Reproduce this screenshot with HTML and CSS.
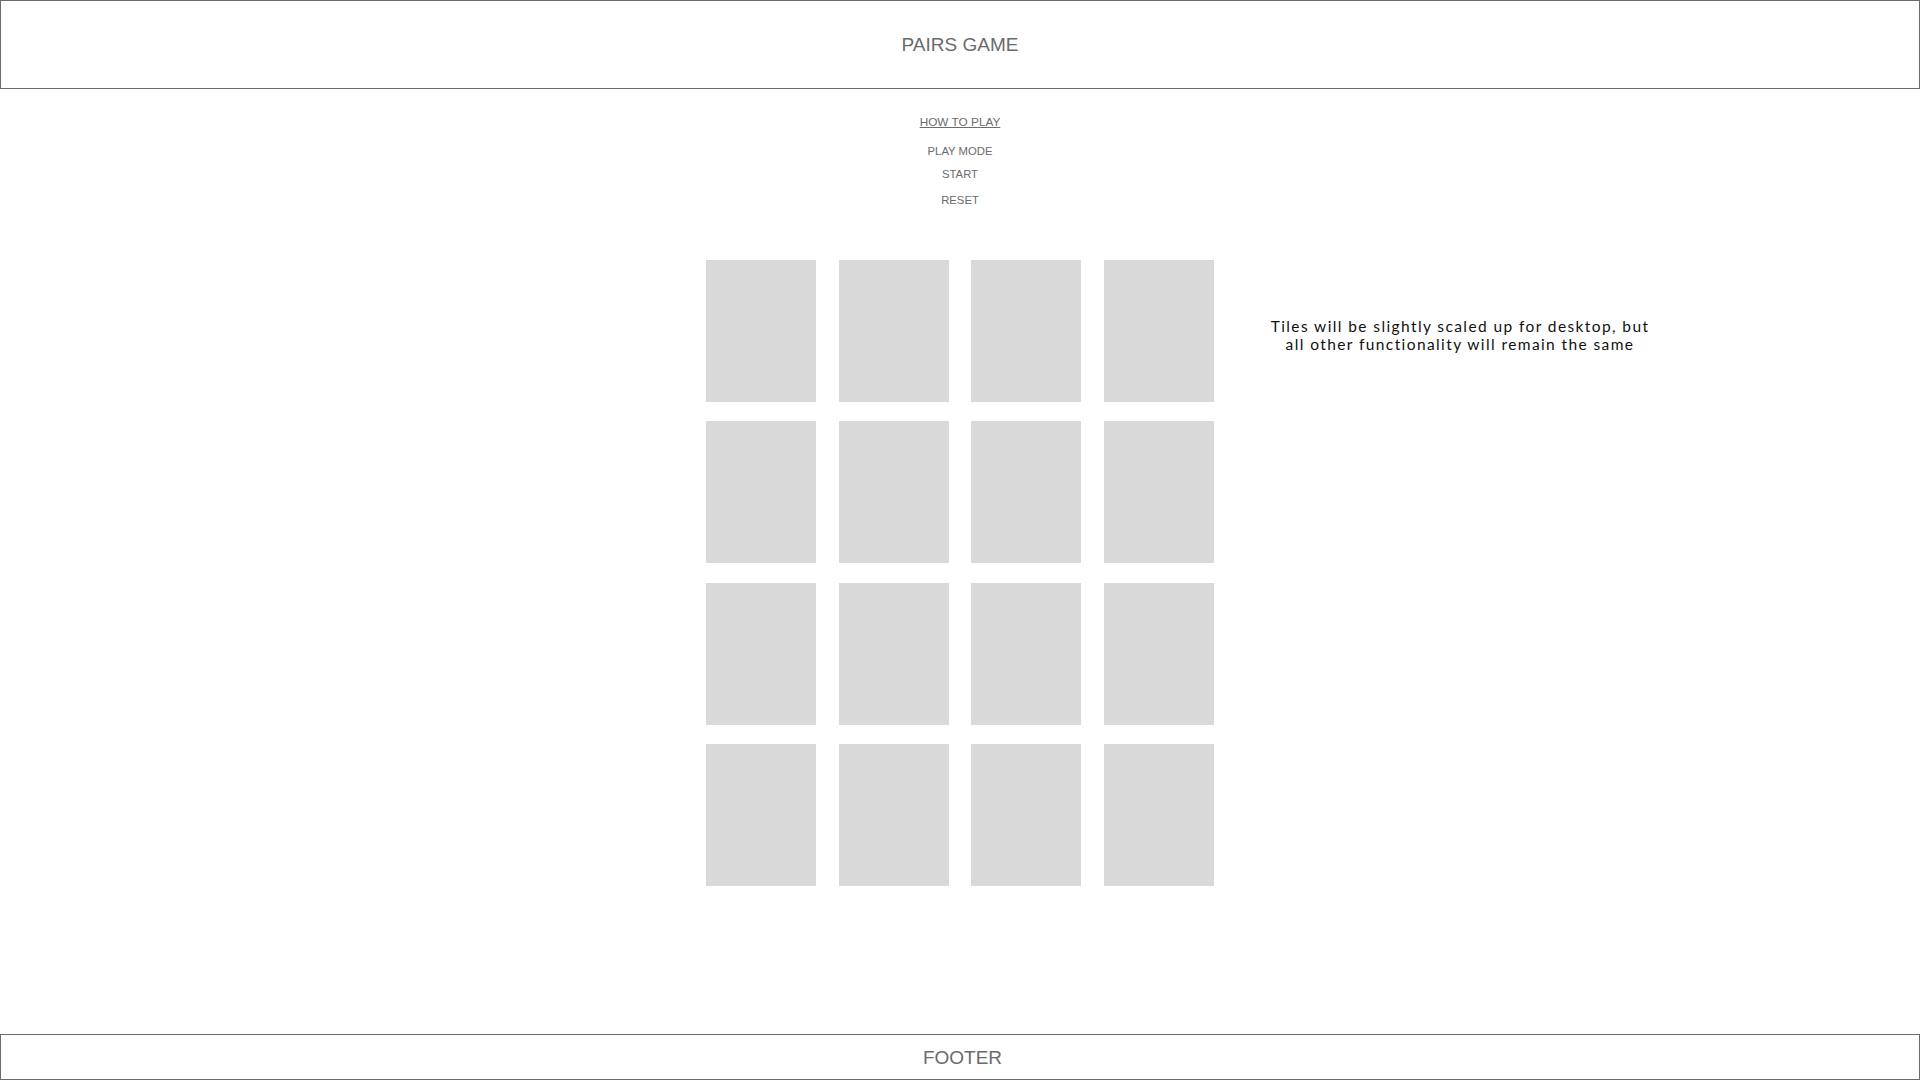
FILE: index.html
```html
<!DOCTYPE html>
<html lang="en">
<head>
    <meta charset="UTF-8">
    <meta name="viewport" content="width=device-width, initial-scale=1.0">
    <title>Pairs Game</title>
    <link rel="stylesheet" href="styles.css">
</head>
<body>
    <header class="site-header">
        <h1>PAIRS GAME</h1>
    </header>

    <nav class="menu">
        <a href="#" class="menu-link how-to">HOW TO PLAY</a>
        <span class="menu-item play-mode">PLAY MODE</span>
        <span class="menu-item start">START</span>
        <span class="menu-item reset">RESET</span>
    </nav>

    <main class="board">
        <div class="tiles">
            <div class="tile"></div>
            <div class="tile"></div>
            <div class="tile"></div>
            <div class="tile"></div>
            <div class="tile"></div>
            <div class="tile"></div>
            <div class="tile"></div>
            <div class="tile"></div>
            <div class="tile"></div>
            <div class="tile"></div>
            <div class="tile"></div>
            <div class="tile"></div>
            <div class="tile"></div>
            <div class="tile"></div>
            <div class="tile"></div>
            <div class="tile"></div>
        </div>
        <p class="note">Tiles will be slightly scaled up for desktop, but all other functionality will remain the same</p>
    </main>

    <footer class="site-footer">FOOTER</footer>
</body>
</html>
```

FILE: styles.css
```css
html, body {
    height: 100%;
}
body {
    margin: 0;
    display: flex;
    flex-direction: column;
    font-family: "Liberation Sans", Arial, sans-serif;
    color: #6b6b6b;
    background: #fff;
}
.site-header {
    height: 87px;
    border: 1px solid #6b6b6b;
    display: flex;
    align-items: center;
    justify-content: center;
}
.site-header h1 {
    margin: 0;
    font-size: 19px;
    font-weight: normal;
    line-height: 1;
}
.menu {
    display: flex;
    flex-direction: column;
    align-items: center;
    padding-top: 26px;
    line-height: 14px;
}
.menu-link {
    font-size: 11.8px;
    color: #6b6b6b;
    text-decoration: underline;
    text-underline-offset: 1px;
}
.menu-item {
    font-size: 11.3px;
}
.play-mode {
    margin-top: 15px;
}
.start {
    margin-top: 9px;
}
.reset {
    margin-top: 12px;
}
.board {
    display: grid;
    grid-template-columns: 1fr auto 1fr;
    margin-top: 53px;
}
.tiles {
    grid-column: 2;
    display: grid;
    grid-template-columns: repeat(4, 110px);
    column-gap: 22.7px;
    row-gap: 19.3px;
}
.tile {
    height: 142px;
    background: #d9d9d9;
}
.note {
    grid-column: 3;
    justify-self: start;
    width: 390px;
    margin: 57px 0 0 51px;
    font-family: Lato, "Open Sans", sans-serif;
    font-size: 15.5px;
    line-height: 18px;
    letter-spacing: 1.4px;
    text-align: center;
    color: #111;
}
.site-footer {
    margin-top: auto;
    height: 43px;
    border: 1px solid #6b6b6b;
    display: flex;
    align-items: center;
    justify-content: center;
    padding: 2px 0 0 5px;
    box-sizing: border-box;
    height: 46px;
    font-size: 19px;
}
```
